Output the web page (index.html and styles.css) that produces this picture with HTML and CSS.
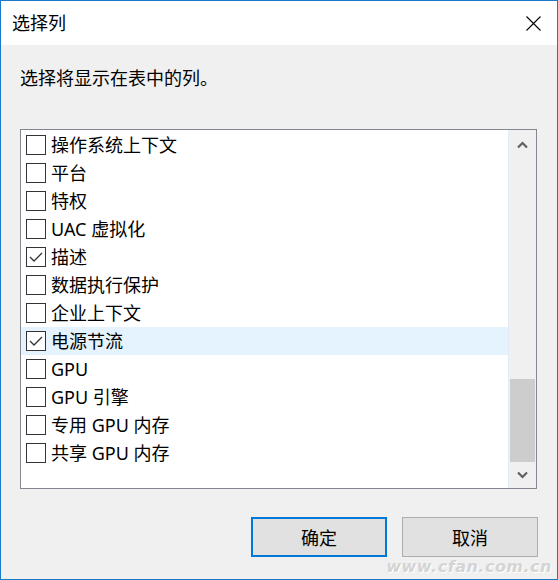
FILE: index.html
```html
<!DOCTYPE html>
<html lang="zh-CN">
<head>
  <meta charset="UTF-8">
  <title>选择列</title>
  <link rel="stylesheet" href="styles.css">
</head>
<body>
  <div class="dialog">
    <div class="titlebar">
      <span class="title">选择列</span>
      <svg class="close" width="15" height="15" viewBox="0 0 15 15">
        <path d="M0.5 0.5 L14.5 14.5 M14.5 0.5 L0.5 14.5" stroke="#000" stroke-width="1.1" fill="none"/>
      </svg>
    </div>

    <div class="content">
      <p class="hint">选择将显示在表中的列。</p>

      <div class="listbox">
        <ul class="items">
          <li class="item"><span class="box"></span>操作系统上下文</li>
          <li class="item"><span class="box"></span>平台</li>
          <li class="item"><span class="box"></span>特权</li>
          <li class="item"><span class="box"></span>UAC 虚拟化</li>
          <li class="item"><span class="box"><svg width="18" height="18" viewBox="0 0 18 18"><polyline points="3,9 7,13 15,5" fill="none" stroke="#333" stroke-width="1.3"/></svg></span>描述</li>
          <li class="item"><span class="box"></span>数据执行保护</li>
          <li class="item"><span class="box"></span>企业上下文</li>
          <li class="item hover"><span class="box"><svg width="18" height="18" viewBox="0 0 18 18"><polyline points="3,9 7,13 15,5" fill="none" stroke="#333" stroke-width="1.3"/></svg></span>电源节流</li>
          <li class="item"><span class="box"></span>GPU</li>
          <li class="item"><span class="box"></span>GPU 引擎</li>
          <li class="item"><span class="box"></span>专用 GPU 内存</li>
          <li class="item"><span class="box"></span>共享 GPU 内存</li>
        </ul>

        <!-- 滚动条 -->
        <div class="scrollbar">
          <div class="sb-btn sb-up">
            <svg width="11" height="8" viewBox="0 0 11 8"><polyline points="1,6.5 5.5,2 10,6.5" fill="none" stroke="#606060" stroke-width="2.2"/></svg>
          </div>
          <div class="sb-track">
            <div class="sb-thumb"></div>
          </div>
          <div class="sb-btn sb-down">
            <svg width="11" height="8" viewBox="0 0 11 8"><polyline points="1,1.5 5.5,6 10,1.5" fill="none" stroke="#606060" stroke-width="2.2"/></svg>
          </div>
        </div>
      </div>

      <div class="buttons">
        <button class="btn btn-default">确定</button>
        <button class="btn">取消</button>
      </div>

      <div class="watermark">www.cfan.com.cn</div>
    </div>
  </div>
</body>
</html>
```

FILE: styles.css
```css
body {
  margin: 0;
  font-family: "Noto Sans", "Noto Sans CJK SC", sans-serif;
  font-size: 18px;
  color: #000;
  background: #f0f0f0;
}
.dialog {
  width: 558px;
  height: 580px;
  box-sizing: border-box;
  border: 1px solid #1979ca;
  display: flex;
  flex-direction: column;
  background: #f0f0f0;
}

/* 标题栏 */
.titlebar {
  height: 44px;
  background: #ffffff;
  display: flex;
  align-items: center;
  justify-content: space-between;
  padding: 0 16px 0 11px;
}
.title {
  line-height: 24px;
}
.close {
  display: block;
  margin-top: 1px;
}

/* 内容 */
.content {
  position: relative;
  flex: 1;
  padding: 21px 0 0 19px;
}
.hint {
  margin: 0;
  line-height: 24px;
}

/* 列表框 */
.listbox {
  margin-top: 39px;
  width: 517px;
  height: 360px;
  box-sizing: border-box;
  border: 1px solid #828790;
  background: #ffffff;
  display: flex;
}
.items {
  flex: 1;
  list-style-type: none;
  margin: 0;
  padding: 1px 0 0 0;
}
.item {
  height: 28px;
  display: flex;
  align-items: center;
  padding-left: 5px;
  line-height: 28px;
  white-space: nowrap;
}
.item.hover {
  background: #e5f3ff;
}
.box {
  width: 20px;
  height: 20px;
  box-sizing: border-box;
  border: 1px solid #333333;
  background: #ffffff;
  margin-right: 5px;
  display: flex;
  align-items: center;
  justify-content: center;
}
.box svg {
  display: block;
}

/* 滚动条样式 */
.scrollbar {
  width: 27px;
  border-left: 1px solid #e3ebf7;
  background: #f0f0f0;
  display: flex;
  flex-direction: column;
}
.sb-btn {
  height: 30px;
  display: flex;
  align-items: center;
  justify-content: center;
}
.sb-down {
  height: 26px;
}
.sb-track {
  flex: 1;
  display: flex;
  flex-direction: column;
  justify-content: flex-end;
}
.sb-thumb {
  height: 83px;
  margin: 0 1px 0 1px;
  background: #cdcdcd;
}

/* 按钮 */
.buttons {
  display: flex;
  justify-content: flex-end;
  gap: 15px;
  margin-top: 28px;
  padding-right: 19px;
}
.btn {
  width: 136px;
  height: 40px;
  box-sizing: border-box;
  border: 1px solid #adadad;
  background: #e1e1e1;
  font-family: "Noto Sans", "Noto Sans CJK SC", sans-serif;
  font-size: 18px;
  color: #000;
  padding: 0;
}
.btn-default {
  border: 2px solid #0078d7;
}

/* 水印 */
.watermark {
  position: absolute;
  right: 5px;
  bottom: 3px;
  font-family: "DejaVu Sans", sans-serif;
  font-size: 16px;
  font-weight: bold;
  font-style: italic;
  color: #d4d4d4;
  text-shadow: 1px 1px 0 #ffffff;
  letter-spacing: 0.5px;
}
```
